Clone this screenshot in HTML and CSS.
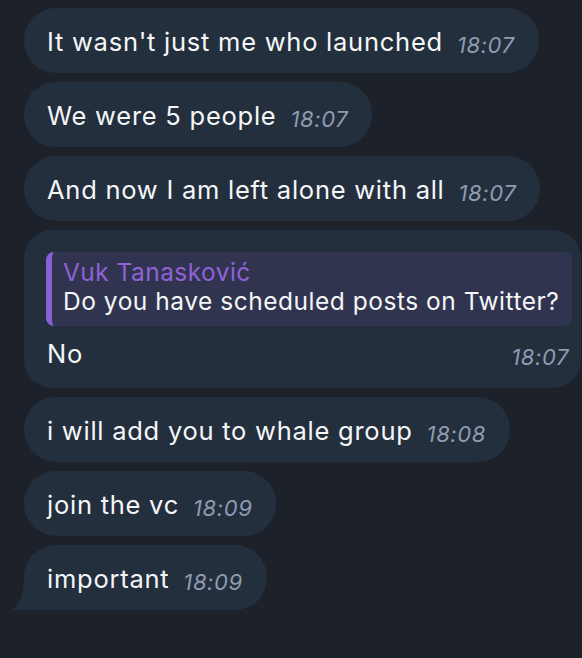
FILE: index.html
```html
<!DOCTYPE html>
<html lang="en">
<head>
    <meta charset="UTF-8">
    <meta name="viewport" content="width=device-width, initial-scale=1.0">
    <title>Chat</title>
    <link rel="stylesheet" href="styles.css">
</head>
<body>
    <div id="chat">
        <div class="bubble">
            <span class="text">It wasn't just me who launched</span>
            <span class="time">18:07</span>
        </div>
        <div class="bubble">
            <span class="text">We were 5 people</span>
            <span class="time">18:07</span>
        </div>
        <div class="bubble">
            <span class="text">And now I am left alone with all</span>
            <span class="time">18:07</span>
        </div>

        <div class="bubble reply-bubble">
            <div class="reply">
                <div class="reply-name">Vuk Tanasković</div>
                <div class="reply-text">Do you have scheduled posts on Twitter?</div>
            </div>
            <div class="reply-body">
                <span class="text">No</span>
                <span class="time">18:07</span>
            </div>
        </div>

        <div class="bubble">
            <span class="text">i will add you to whale group</span>
            <span class="time">18:08</span>
        </div>
        <div class="bubble">
            <span class="text">join the vc</span>
            <span class="time">18:09</span>
        </div>
        <div class="bubble last">
            <span class="text">important</span>
            <span class="time">18:09</span>
            <svg class="tail" width="26" height="36" viewBox="0 0 26 36">
                <path d="M12 0 L26 0 L26 36 L14 36 C18 36 20 34 24 34 C24 36 18 36 14 36 L0 36 C8 31 12 20 12 0 Z" fill="#242f3e"/>
            </svg>
        </div>
    </div>
</body>
</html>
```

FILE: styles.css
```css
body {
    margin: 0;
    padding: 0;
    background: #1c212a;
    font-family: Inter, "Noto Sans", Arial, sans-serif;
    color: #f4f6f8;
    overflow: hidden;
}

#chat {
    display: flex;
    flex-direction: column;
    align-items: flex-start;
    gap: 9px;
    padding: 8px 0 0 24px;
}

.bubble {
    position: relative;
    display: flex;
    align-items: baseline;
    gap: 14px;
    background: #242f3e;
    border-radius: 32px;
    padding: 19px 24px 17px 23px;
    height: 29px;
}

.text {
    font-size: 25.5px;
    line-height: 29px;
    letter-spacing: 0.75px;
}

.time {
    font-size: 22px;
    font-style: italic;
    letter-spacing: 0.6px;
    color: #8e9bb0;
    position: relative;
    top: 2px;
}

.reply-bubble {
    flex-direction: column;
    align-items: stretch;
    gap: 0;
    height: auto;
    border-radius: 28px;
    padding: 22px 9px 10px 22px;
    width: 526px;
}

.reply {
    background: #30344f;
    border-left: 6px solid #8d5fd7;
    border-radius: 8px;
    padding: 6px 8px 10px 11px;
}

.reply-name {
    color: #9062d8;
    font-size: 24.5px;
    line-height: 29px;
    letter-spacing: 0.45px;
}

.reply-text {
    font-size: 24.5px;
    line-height: 29px;
    letter-spacing: 0.52px;
    white-space: nowrap;
}

.reply-body {
    display: flex;
    justify-content: space-between;
    align-items: baseline;
    padding: 13px 3px 10px 1px;
}

.last {
    border-bottom-left-radius: 0;
}

.tail {
    position: absolute;
    left: -12px;
    bottom: 0;
}
```
